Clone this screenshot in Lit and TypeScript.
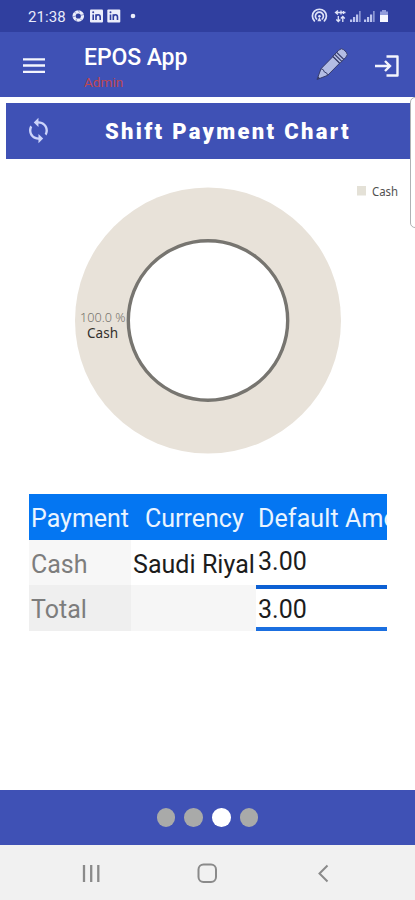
import { LitElement, html, css, svg } from "lit";
import { customElement } from "lit/decorators.js";
import { classMap } from "lit/directives/class-map.js";

@customElement("status-bar")
class StatusBar extends LitElement {
  static styles = css`
    :host { display: flex; height: 32px; background: #303f9f; color: #e8ebfb; align-items: center; justify-content: space-between; }
    .time { font: 400 15px/32px Roboto, sans-serif; letter-spacing: 0.1px; width: 43px; white-space: nowrap; padding-top: 1px; }
    .left { display: flex; align-items: center; padding-left: 28px; }
    svg { display: block; }
  `;
  render() {
    const linked = (x: number) => svg`
      <rect x=${x} y="9.5" width="13" height="13" rx="1" fill="#eceefb" />
      <path d="M${x + 3.2} 14.5v5.5M${x + 6} 20v-5.7M${x + 6} 17q0-2.3 2.1-2.3t2.1 2.3v3" fill="none" stroke="#303f9f" stroke-width="1.6" />
      <circle cx=${x + 3.2} cy="12.3" r="1" fill="#303f9f" />`;
    return html`
      <div class="left">
        <span class="time">21:38</span>
        <svg width="75" height="32" viewBox="71 0 75 32">
          <circle cx="78.3" cy="16" r="4.2" fill="none" stroke="#eceefb" stroke-width="3.2" />
          <path d="M78 10l1.500 2.500M84 14.500l-3 .8M82 20.500l-2-2M76 21.800l.3-3M72.500 17l3-1M74 11.500l2 2" stroke="#303f9f" stroke-width=".5" />
          ${linked(90)}${linked(107.3)}
          <circle cx="133" cy="16" r="2.300" fill="#eceefb" />
        </svg>
      </div>
      <svg width="110" height="32" viewBox="305 0 110 32">
        <g fill="none" stroke="#dfe3f8" stroke-width="1.700" stroke-linecap="round">
          <path d="M314.400 20.800a7 6.800 0 1 1 10 0M316.600 19a4 4 0 1 1 5.600 0" />
        </g>
        <circle cx="319.400" cy="16.300" r="1.300" fill="#dfe3f8" />
        <path d="M319.400 17l-2 4.300h4z" fill="#dfe3f8" />
        <g fill="none" stroke="#dfe3f8" stroke-width="1.300">
          <path d="M335.500 12.500h10M338 10.500l-2.500 2 2.500 2M341 10.500v4M343.500 11v3M338.300 16v5.500M336.300 19.500l2 2 2-2M342.800 22v-5M340.800 18.500l2-2 2 2" />
        </g>
        <g fill="#bcc4ef">
          <path d="M350 19.500h2.200v2.500H350zM353 17h2.200v5H353zM356 14.500h2.200V22H356z" />
          <path d="M359 11h1.700v11H359z" opacity=".65" />
          <path d="M364 19.500h2.200v2.500H364zM367 17h2.200v5H367zM370 14.500h2.200V22H370z" />
          <path d="M373 11h1.700v11H373z" opacity=".65" />
        </g>
        <path d="M382 10h4v1.500h2V15h-8v-3.500h2z" fill="#929ddc" />
        <path d="M380 15h8v7h-8z" fill="#f6f7ff" />
      </svg>`;
  }
}

@customElement("app-bar")
class AppBar extends LitElement {
  static styles = css`
    :host { display: flex; height: 65px; background: #3f51b5; align-items: center; font-family: Roboto, sans-serif; }
    svg { display: block; flex: none; }
    .titles { flex: 1; padding: 6px 0 0 14px; }
    .title { color: #fff; font-size: 23px; line-height: 26px; font-weight: 500; white-space: nowrap; letter-spacing: -0.1px; }
    .user { color: #bd4652; font-size: 13.5px; line-height: 18px; margin-top: 2px; letter-spacing: 0.050px; }
  `;
  render() {
    return html`
      <svg width="70" height="65" viewBox="0 32 70 65"><path d="M23 59.300h22M23 65.500h22M23 71.800h22" stroke="#f4f5fd" stroke-width="2.300" /></svg>
      <div class="titles"><div class="title">EPOS App</div><div class="user">Admin</div></div>
      <svg width="105" height="65" viewBox="310 32 105 65">
        <g transform="translate(317 79.500) rotate(-45.500)" stroke="#343a68" stroke-width=".9" stroke-linejoin="round">
          <path d="M0 0L10.500-4.700H28V4.700H10.500z" fill="#b3bce4" />
          <path d="M27.500-5H36q4 0 4 3.300v3.400q0 3.300-4 3.300h-8.500z" fill="#b3bce4" />
          <path d="M10.500-4.700q1.800 2.300 0 4.700q1.800 2.300 0 4.700" fill="none" />
          <path d="M27.500-5V5M30.300-5V5M33.100-5V5" fill="none" stroke-width="1.300" />
          <path d="M0 0L3-1.400V1.400z" fill="#343a68" stroke="none" />
        </g>
        <g fill="none" stroke="#f4f5fd" stroke-width="2.400">
          <path d="M386.500 56.500H397.500V75.500H386.500" stroke-linejoin="round" />
          <path d="M375 66h14M385 61l5 5-5 5" />
        </g>
      </svg>`;
  }
}

@customElement("payment-chart")
class PaymentChart extends LitElement {
  static styles = css`
    :host { display: block; height: 335px; }
    svg { display: block; font-family: "Noto Sans", "Open Sans", sans-serif; }
    .pct { font-size: 13.500px; font-weight: 300; fill: #77746d; }
    .name { font-size: 14px; fill: #33312d; }
    .legend { font-size: 12px; fill: #505050; }
  `;
  render() {
    return html`
      <svg width="415" height="335" viewBox="0 159 415 335">
        <circle cx="208" cy="320.500" r="133" fill="#e8e2d9" />
        <circle cx="208" cy="320.500" r="79.700" fill="#fff" stroke="#777570" stroke-width="3.400" />
        <text class="pct" x="80" y="322" textLength="45.500" lengthAdjust="spacingAndGlyphs">100.0 %</text>
        <text class="name" x="87" y="338" textLength="31" lengthAdjust="spacingAndGlyphs">Cash</text>
        <rect x="357" y="186" width="9" height="9.500" fill="#e4e1d7" />
        <text class="legend" x="372" y="195.500" textLength="26" lengthAdjust="spacingAndGlyphs">Cash</text>
      </svg>`;
  }
}

@customElement("payment-table")
class PaymentTable extends LitElement {
  static styles = css`
    :host { display: grid; width: 358px; margin-left: 29px; overflow: hidden; grid-template-columns: 102px 125px 131px; grid-template-rows: 45.500px 45.500px 46px; font: 25px/45px Roboto, sans-serif; white-space: nowrap; }
    div { box-sizing: border-box; }
    .head { background: #0476f2; color: #eaf4ff; padding-top: 2px; }
    .label { background: #f7f7f7; color: #7d7d7d; padding: 2px 0 0 2px; }
    .total { background: #efefef; }
    .first { padding-left: 2px; }
    .second { padding-left: 14px; }
    .third { padding-left: 2px; letter-spacing: 0.100px; overflow: hidden; }
    .currency { color: #1c1c1c; padding: 2px 0 0 2px; letter-spacing: 0.050px; }
    .blank { background: #f6f6f6; }
    .amount { color: #1c1c1c; padding-left: 2px; border-bottom: 4px solid #1b6fe0; line-height: 44px; }
    .cash { height: 49px; z-index: 1; border-color: #0d60d3; }
    .sum { padding-top: 3px; line-height: 43px; }
  `;
  render() {
    return html`
      <div class="head first">Payment</div><div class="head second">Currency</div><div class="head third">Default Amount</div>
      <div class="label">Cash</div><div class="currency">Saudi Riyal</div><div class="amount cash">3.00</div>
      <div class="label total">Total</div><div class="blank"></div><div class="amount sum">3.00</div>`;
  }
}

@customElement("app-root")
class AppRoot extends LitElement {
  static styles = css`
    :host { display: flex; flex-direction: column; width: 415px; height: 900px; background: #fff; overflow: hidden; position: relative; }
    .banner { display: flex; align-items: center; height: 56px; margin: 6px 5px 0 6px; background: #3f51b5; flex: none; }
    .banner svg { flex: none; }
    h1 { margin: 0 0 0 36px; color: #fff; font: 900 22px/56px Roboto, sans-serif; letter-spacing: 2.320px; white-space: nowrap; padding-top: 2px; }
    payment-table { flex: none; }
    .spacer { flex: 1; }
    .dots { height: 55px; background: #3f51b5; display: flex; align-items: center; justify-content: center; gap: 9px; }
    .dot { width: 18.700px; height: 18.700px; border-radius: 50%; background: #a9aaa9; }
    .dot.active { background: #fff; }
    .nav { height: 55px; background: #f1f1f1; }
    .nav svg { display: block; }
    .edge { position: absolute; left: 410px; top: 97px; width: 10px; height: 131px; box-sizing: border-box; border: 1px solid #afb2b5; border-radius: 6px; background: #fff; }
  `;
  render() {
    return html`
      <status-bar></status-bar>
      <app-bar></app-bar>
      <div class="banner">
        <svg width="63" height="56" viewBox="6 103 63 56">
          <path transform="translate(24.300 116.700) scale(1.180 1.150)" fill="#ccd4fa" d="M12 4V1L8 5l4 4V6c3.310 0 6 2.690 6 6 0 1.010-.25 1.970-.7 2.800l1.460 1.460C19.540 15.030 20 13.570 20 12c0-4.420-3.580-8-8-8zm0 14c-3.310 0-6-2.690-6-6 0-1.010.25-1.970.7-2.800L5.240 7.740C4.460 8.970 4 10.430 4 12c0 4.420 3.580 8 8 8v3l4-4-4-4v3z" />
        </svg>
        <h1>Shift Payment Chart</h1>
      </div>
      <payment-chart></payment-chart>
      <payment-table></payment-table>
      <div class="spacer"></div>
      <div class="dots">${[0, 1, 2, 3].map((i) => html`<span class=${classMap({ dot: true, active: i === 2 })}></span>`)}</div>
      <div class="nav">
        <svg width="415" height="55" viewBox="0 845 415 55" fill="none" stroke="#8a8a8a" stroke-width="2">
          <path d="M84 865v17M91.200 865v17M98.300 865v17" stroke-width="2.300" />
          <rect x="198.500" y="864.500" width="17.500" height="17.500" rx="5" />
          <path d="M327.500 865.500l-8 8 8 8" />
        </svg>
      </div>
      <div class="edge"></div>`;
  }
}
